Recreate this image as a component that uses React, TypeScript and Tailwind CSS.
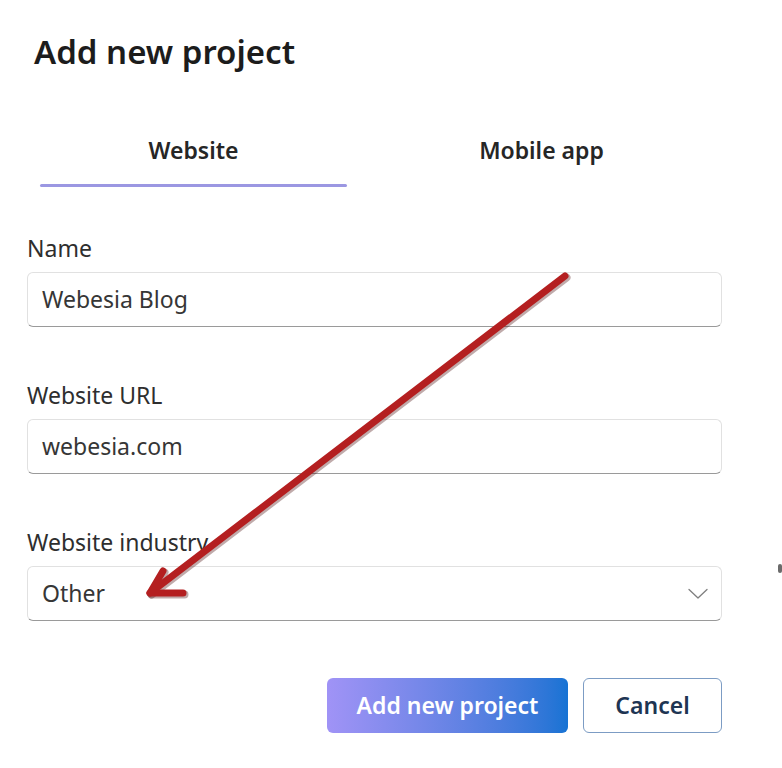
const font = { fontFamily: '"Noto Sans", "Open Sans", sans-serif' }

function Field({ label, value, select }: { label: string; value: string; select?: boolean }) {
  return (
    <div className="flex flex-col">
      <label className="text-[23px] leading-[30px] text-[#2e2e2e]">{label}</label>
      <div className="mt-[9px] h-[55px] flex items-center justify-between rounded-[6px] border border-[#e1e1e1] border-b-[#9a9a9a] bg-white pl-[14px] pr-[13px]">
        <span className="text-[23px] text-[#363636]">{value}</span>
        {select && (
          <svg width="20" height="12" viewBox="0 0 20 12" fill="none">
            <path d="M1 1.5 L10 10 L19 1.5" stroke="#7f7f7f" strokeWidth="1.3" strokeLinecap="round" strokeLinejoin="round" />
          </svg>
        )}
      </div>
    </div>
  )
}

export default function App() {
  return (
    <div className="relative w-[782px] h-[768px] bg-white overflow-hidden" style={font}>
      <div className="flex flex-col pl-[27px] pr-[60px]">
        <h1 className="mt-[32px] ml-[7px] text-[33px] leading-[40px] font-semibold text-[#1c1c1c]">
          Add new project
        </h1>

        {/* tabs */}
        <div className="mt-[62px] ml-[13px] flex gap-[41px]">
          <div className="w-[307px] flex flex-col items-center">
            <span className="text-[23px] leading-[32px] font-semibold text-[#262626]">Website</span>
            <div className="mt-[18px] h-[3px] w-full bg-[#9b97e2] rounded-full" />
          </div>
          <div className="w-[307px] flex flex-col items-center">
            <span className="text-[23px] leading-[32px] font-semibold text-[#262626]">Mobile app</span>
          </div>
        </div>

        <div className="mt-[46px] flex flex-col gap-[53px]">
          <Field label="Name" value="Webesia Blog" />
          <Field label="Website URL" value="webesia.com" />
          <Field label="Website industry" value="Other" select />
        </div>

        <div className="mt-[57px] flex justify-end gap-[15px]">
          <button className="h-[55px] w-[241px] rounded-[6px] bg-gradient-to-r from-[#a093f6] to-[#1673d4] text-[23px] font-semibold text-white">
            Add new project
          </button>
          <button className="h-[55px] w-[139px] rounded-[6px] border border-[#7c9cc4] bg-white text-[23px] font-semibold text-[#1e3553]">
            Cancel
          </button>
        </div>
      </div>

      {/* annotation arrow */}
      <svg className="absolute left-0 top-0 pointer-events-none" width="782" height="768">
        <g stroke="#4a0d0d" strokeOpacity="0.35" strokeWidth="8" strokeLinecap="round" strokeLinejoin="round" fill="none" transform="translate(1.5,1.5)">
          <path d="M565 276 L150 593" />
          <path d="M163 571 L150 593 L183 593" />
        </g>
        <g stroke="#b41f20" strokeWidth="7" strokeLinecap="round" strokeLinejoin="round" fill="none">
          <path d="M565 276 L150 593" />
          <path d="M163 571 L150 593 L183 593" />
        </g>
      </svg>
      <span className="absolute left-[778px] top-[564px] w-[4px] h-[9px] rounded-full bg-[#6b6b6b]" />
    </div>
  )
}
